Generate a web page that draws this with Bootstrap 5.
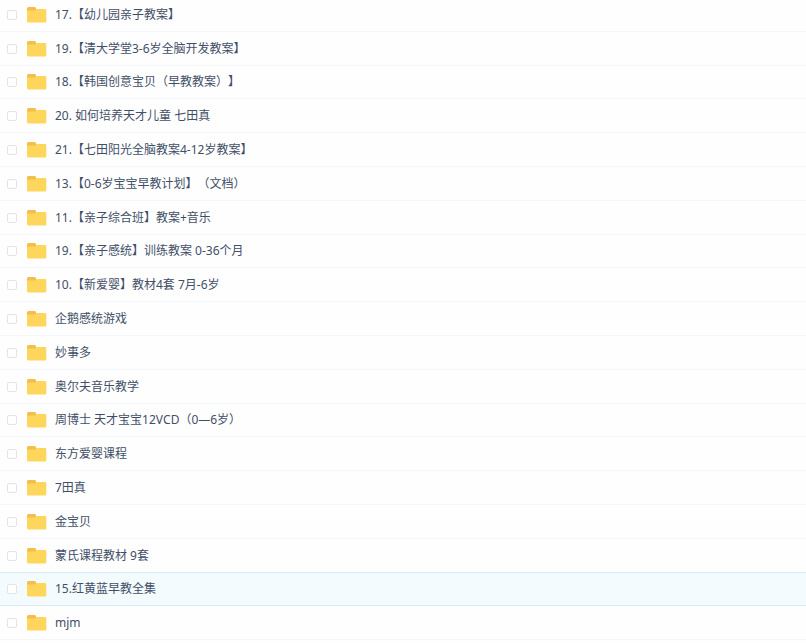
<!DOCTYPE html>
<html lang="zh-CN">
<head>
<meta charset="utf-8">
<meta name="viewport" content="width=device-width, initial-scale=1">
<title>文件列表</title>
<link href="https://cdn.jsdelivr.net/npm/bootstrap@5.3.0/dist/css/bootstrap.min.css" rel="stylesheet">
<style>
body { background: #fefefe; color: #424e67; font: 12px/18px "Noto Sans", "Noto Sans CJK SC", sans-serif; text-spacing-trim: space-all; font-kerning: none; }
.file-list { margin: -2px 0 3px; }
.file-row { border-bottom: 1px solid #f3f6fa; padding: 1px 0 0 7px; }
.file-row.before-active { border-bottom-color: #d5ebf7; }
.file-row.is-active { background: #f3fbff; border-bottom-color: #d5ebf7; }
.file-row .form-check-input { width: 10px; height: 10px; border: 1px solid #e2e4e8; border-radius: 2px; background-color: #fff; }
.file-row .form-check-input:checked { background-color: #09aaff; }
.folder { width: 20px; height: 16px; margin-left: 10px; }
.file-name { padding-left: 8px; }
</style>
</head>
<body class="d-flex flex-column min-vh-100">
<svg class="d-none" aria-hidden="true">
  <symbol id="folder" viewBox="0 0 20 16">
    <path fill="#f5bd4b" d="M1.5 0H7.5Q8.5 0 8.9 1L9.5 3H19V8H0V1.5Q0 0 1.5 0Z"/>
    <path fill="#ffd65c" d="M0 3.6H8.2L10 2H18Q19.3 2 19.3 3.4V14Q19.3 15.5 18 15.5H1.5Q0 15.5 0 14Z"/>
  </symbol>
</svg>
<ul class="file-list list-unstyled d-flex flex-column flex-fill" id="files"></ul>
<script>
const names = [
  "17.【幼儿园亲子教案】",
  "19.【清大学堂3-6岁全脑开发教案】",
  "18.【韩国创意宝贝（早教教案）】",
  "20. 如何培养天才儿童 七田真",
  "21.【七田阳光全脑教案4-12岁教案】",
  "13.【0-6岁宝宝早教计划】（文档）",
  "11.【亲子综合班】教案+音乐",
  "19.【亲子感统】训练教案 0-36个月",
  "10.【新爱婴】教材4套 7月-6岁",
  "企鹅感统游戏",
  "妙事多",
  "奥尔夫音乐教学",
  "周博士 天才宝宝12VCD（0—6岁）",
  "东方爱婴课程",
  "7田真",
  "金宝贝",
  "蒙氏课程教材 9套",
  "15.红黄蓝早教全集",
  "mjm"
];
const active = 17;
document.getElementById("files").innerHTML = names.map((name, i) => {
  const state = i === active ? " is-active" : i === active - 1 ? " before-active" : "";
  return `<li class="file-row d-flex align-items-center flex-fill${state}">
    <input class="form-check-input m-0 flex-shrink-0" type="checkbox" id="file-${i}">
    <svg class="folder flex-shrink-0" aria-hidden="true"><use href="#folder"/></svg>
    <label class="file-name" for="file-${i}">${name}</label>
  </li>`;
}).join("");
</script>
<script src="https://cdn.jsdelivr.net/npm/bootstrap@5.3.0/dist/js/bootstrap.bundle.min.js"></script>
</body>
</html>
